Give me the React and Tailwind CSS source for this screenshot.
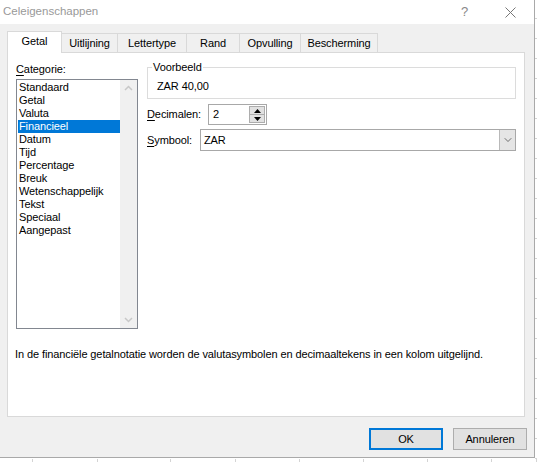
import { ChevronDown } from 'lucide-react'

const categories = [
  'Standaard',
  'Getal',
  'Valuta',
  'Financieel',
  'Datum',
  'Tijd',
  'Percentage',
  'Breuk',
  'Wetenschappelijk',
  'Tekst',
  'Speciaal',
  'Aangepast',
]

const tabs = [
  { label: 'Uitlijning', w: 'w-[57px]' },
  { label: 'Lettertype', w: 'w-[70px]' },
  { label: 'Rand', w: 'w-[54px]' },
  { label: 'Opvulling', w: 'w-[62px]' },
  { label: 'Bescherming', w: 'w-[78px]' },
]

const Tri = ({ up }) => (
  <svg width="7" height="4" viewBox="0 0 7 4">
    <path d={up ? 'M0 4 L3.5 0 L7 4 Z' : 'M0 0 L3.5 4 L7 0 Z'} fill="#000" />
  </svg>
)

const ScrollArrow = ({ up }) => (
  <svg width="9" height="6" viewBox="0 0 9 6">
    <path d={up ? 'M1 5 L4.5 1.5 L8 5' : 'M1 1 L4.5 4.5 L8 1'} fill="none" stroke="#c8c8c8" strokeWidth="1.5" />
  </svg>
)

const App = () => {
  return (
    <div className="w-[537px] h-[462px] bg-white overflow-hidden flex flex-col text-[11px] tracking-[-0.1px] text-black [font-family:'Liberation_Sans',Arial,sans-serif]">
      <div className="flex">
        {/* dialog */}
        <div className="w-[535px] h-[458px] flex flex-col border-r border-b border-[#a9a9a9] bg-[#f0f0f0]">
          <div className="h-[24px] bg-white flex items-center pl-[3px] text-[#999999] shrink-0">
            <span className="text-[11.5px] tracking-normal">Celeigenschappen</span>
            <span className="ml-auto w-[10px] text-[13px] text-[#888]">?</span>
            <svg className="ml-[34px] mr-[18px]" width="11" height="11" viewBox="0 0 11 11">
              <path d="M0.5 0.5 L10.5 10.5 M10.5 0.5 L0.5 10.5" stroke="#777" strokeWidth="1" />
            </svg>
          </div>

          <div className="flex-1 flex flex-col pl-[7px] pr-[9px] pt-[7px]">
            {/* tabs */}
            <div className="flex items-end h-[21px] relative z-10">
              <div className="w-[55px] h-[22px] -mb-[1px] bg-white border border-b-0 border-[#d9d9d9] flex items-center justify-center pb-[2px]">
                Getal
              </div>
              {tabs.map((t) => (
                <div
                  key={t.label}
                  className={`${t.w} h-[19px] -ml-[1px] border border-b-0 border-[#d9d9d9] flex items-center justify-center`}
                >
                  {t.label}
                </div>
              ))}
            </div>

            {/* panel */}
            <div className="h-[365px] bg-white border border-[#d9d9d9] flex flex-col pl-[7px] pr-[7px] pt-[9px]">
              <div className="flex">
                <div className="w-[122px] ml-[1px] flex flex-col">
                  <div className="leading-[14px] h-[17px]">
                    <span className="underline underline-offset-2">C</span>ategorie:
                  </div>
                  <div className="h-[250px] border border-[#828790] flex">
                    <div className="flex-1 flex flex-col pt-[1px] pl-[1px]">
                      {categories.map((c) => (
                        <div
                          key={c}
                          className={`h-[13px] leading-[13px] pl-[1px] ${c === 'Financieel' ? 'bg-[#0078d7] text-white' : ''}`}
                        >
                          {c}
                        </div>
                      ))}
                    </div>
                    <div className="w-[17px] bg-[#f0f0f0] flex flex-col items-center justify-between py-[5px]">
                      <ScrollArrow up />
                      <ScrollArrow />
                    </div>
                  </div>
                </div>

                <div className="flex-1 ml-[9px] pr-[1px] pt-[5px] flex flex-col">
                  <div className="h-[32px] border border-[#dcdcdc] relative pl-[9px] pt-[10px]">
                    <span className="absolute -top-[8px] left-[4px] bg-white px-[1px] leading-[14px]">Voorbeeld</span>
                    <span className="leading-[14px]">ZAR 40,00</span>
                  </div>
                  <div className="flex items-center mt-[5px] h-[21px]">
                    <span className="w-[61px]">
                      <span className="underline underline-offset-2">D</span>ecimalen:
                    </span>
                    <div className="w-[59px] h-[21px] border border-[#a8a8a8] flex items-center">
                      <span className="flex-1 pl-[4px]">2</span>
                      <div className="w-[16px] h-[17px] mr-[1px] flex flex-col border border-[#adadad]">
                        <div className="flex-1 bg-[#e1e1e1] flex items-center justify-center border-b border-[#adadad]">
                          <Tri up />
                        </div>
                        <div className="flex-1 bg-[#e1e1e1] flex items-center justify-center">
                          <Tri />
                        </div>
                      </div>
                    </div>
                  </div>
                  <div className="flex items-center mt-[4px] h-[22px]">
                    <span className="w-[53px]">
                      <span className="underline underline-offset-2">S</span>ymbool:
                    </span>
                    <div className="flex-1 h-[22px] border border-[#a8a8a8] flex items-center">
                      <span className="flex-1 pl-[3px]">ZAR</span>
                      <div className="w-[16px] h-[20px] bg-[#e5e5e5] border-l border-[#b9b9b9] flex items-center justify-center">
                        <ChevronDown size={12} strokeWidth={1.5} color="#444" />
                      </div>
                    </div>
                  </div>
                </div>
              </div>

              <p className="mt-[18px] leading-[14px] whitespace-nowrap">
                In de financiële getalnotatie worden de valutasymbolen en decimaaltekens in een kolom uitgelijnd.
              </p>
            </div>

            {/* buttons */}
            <div className="flex justify-end gap-[10px] mt-[11px] -mr-[2px]">
              <button className="w-[74px] h-[22px] bg-[#e1e1e1] border-2 border-[#0078d7] flex items-center justify-center">
                OK
              </button>
              <button className="w-[74px] h-[22px] bg-[#e1e1e1] border border-[#adadad] flex items-center justify-center">
                Annuleren
              </button>
            </div>
          </div>
        </div>

        {/* sheet column on the right */}
        <div className="flex-1 flex flex-col">
          {Array.from({ length: 23 }).map((_, i) => (
            <div key={i} className="h-[20px] border-b border-[#d4d4d4] first:h-[19px]" />
          ))}
        </div>
      </div>

      {/* sheet row below */}
      <div className="flex-1 flex">
        {[33, 65, 73, 65, 64, 64, 64, 64, 45].map((w, i) => (
          <div key={i} className="border-r border-[#d4d4d4]" style={{ width: w }} />
        ))}
      </div>
    </div>
  )
}

export default App
